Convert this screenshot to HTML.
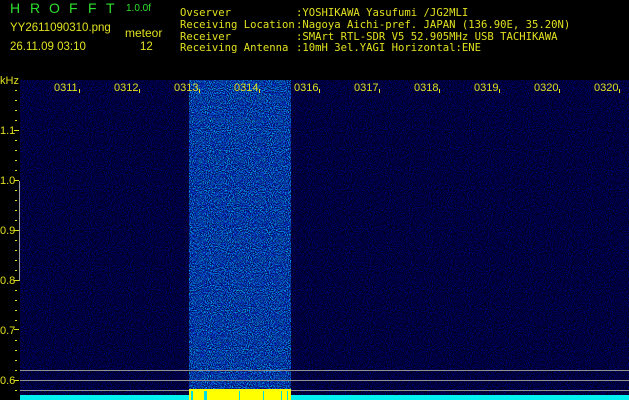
<!DOCTYPE html>
<html><head><style>
html,body{margin:0;padding:0;background:#000;width:629px;height:400px;overflow:hidden}
svg{display:block}
text{font-family:"Liberation Sans",sans-serif}
.m{font-family:"DejaVu Sans Mono","Liberation Mono",monospace}
</style></head><body>
<svg width="629" height="400" xmlns="http://www.w3.org/2000/svg" shape-rendering="crispEdges">
<defs>
<filter id="n1" x="0" y="0" width="100%" height="100%" color-interpolation-filters="sRGB">
<feTurbulence type="fractalNoise" baseFrequency="0.95" numOctaves="2" seed="3"/>
<feColorMatrix values="0 0 0 0 0  0 0 0 0 0  6 0 0 0 -2.75  0 0 0 0 1"/>
</filter>
<filter id="n2" x="0" y="0" width="100%" height="100%" color-interpolation-filters="sRGB">
<feTurbulence type="fractalNoise" baseFrequency="0.95" numOctaves="2" seed="7"/>
<feColorMatrix values="0 0 0 0 0  6 0 0 0 -3.0  5 0 0 0 -1.8  0 0 0 0 1"/>
</filter>
</defs>
<rect x="0" y="0" width="629" height="400" fill="#000"/>
<rect x="20" y="80" width="609" height="316" fill="#000030"/>
<rect x="20" y="80" width="609" height="316" fill="#000" filter="url(#n1)" opacity="0.35"/>
<rect x="189" y="80" width="102" height="312" fill="#0836a4"/>
<rect x="189" y="80" width="102" height="312" fill="#000" filter="url(#n2)" opacity="0.6"/>
<!-- header -->
<g fill="#2ee02e" font-size="14">
<text x="10" y="13">H</text><text x="30" y="13">R</text><text x="49" y="13">O</text><text x="69" y="13">F</text><text x="88" y="13">F</text><text x="106" y="13">T</text>
</g>
<text x="126" y="11" fill="#2ee02e" font-size="10">1.0.0f</text>
<g fill="#e0e020" font-size="11.5">
<text x="10" y="31">YY2611090310.png</text>
<text x="125" y="37" font-size="12">meteor</text>
<text x="10" y="50">26.11.09 03:10</text>
<text x="140" y="50">12</text>
</g>
<g fill="#e0e020" font-size="10.6" class="m">
<text x="180" y="16" class="m">Ovserver</text><text x="296" y="16" class="m">:YOSHIKAWA Yasufumi /JG2MLI</text>
<text x="180" y="28" class="m">Receiving Location</text><text x="296" y="28" class="m">:Nagoya Aichi-pref. JAPAN (136.90E, 35.20N)</text>
<text x="180" y="40" class="m">Receiver</text><text x="296" y="40" class="m">:SMArt RTL-SDR V5 52.905MHz USB TACHIKAWA</text>
<text x="180" y="51" class="m">Receiving Antenna</text><text x="296" y="51" class="m">:10mH 3el.YAGI Horizontal:ENE</text>
</g>
<!-- time labels -->
<g fill="#e0e020" font-size="11">
<text x="0" y="84">kHz</text>
<text x="54" y="91">0311</text><text x="114" y="91">0312</text><text x="174" y="91">0313</text><text x="234" y="91">0314</text><text x="294" y="91">0316</text>
<text x="354" y="91">0317</text><text x="414" y="91">0318</text><text x="474" y="91">0319</text><text x="534" y="91">0320</text><text x="594" y="91">0320</text>
</g>
<g fill="#e0e020">
<rect x="79" y="89" width="1" height="4"/><rect x="139" y="89" width="1" height="4"/><rect x="199" y="89" width="1" height="4"/><rect x="259" y="89" width="1" height="4"/><rect x="319" y="89" width="1" height="4"/><rect x="379" y="89" width="1" height="4"/><rect x="439" y="89" width="1" height="4"/><rect x="499" y="89" width="1" height="4"/><rect x="559" y="89" width="1" height="4"/><rect x="619" y="89" width="1" height="4"/>
</g>
<!-- y axis -->
<g fill="#e0e020" font-size="11">
<text x="0" y="134">1.1</text><text x="0" y="184">1.0</text><text x="0" y="234">0.9</text><text x="0" y="284">0.8</text><text x="0" y="334">0.7</text><text x="0" y="384">0.6</text>
</g>
<g fill="#e0e020">
<rect x="15" y="90" width="2" height="1"/><rect x="15" y="100" width="2" height="1"/><rect x="15" y="110" width="2" height="1"/><rect x="15" y="120" width="2" height="1"/><rect x="14" y="130" width="5" height="1"/>
<rect x="15" y="140" width="2" height="1"/><rect x="15" y="150" width="2" height="1"/><rect x="15" y="160" width="2" height="1"/><rect x="15" y="170" width="2" height="1"/><rect x="14" y="180" width="5" height="1"/>
<rect x="15" y="190" width="2" height="1"/><rect x="15" y="200" width="2" height="1"/><rect x="15" y="210" width="2" height="1"/><rect x="15" y="220" width="2" height="1"/><rect x="14" y="230" width="5" height="1"/>
<rect x="15" y="240" width="2" height="1"/><rect x="15" y="250" width="2" height="1"/><rect x="15" y="260" width="2" height="1"/><rect x="15" y="270" width="2" height="1"/><rect x="14" y="280" width="5" height="1"/>
<rect x="15" y="290" width="2" height="1"/><rect x="15" y="300" width="2" height="1"/><rect x="15" y="310" width="2" height="1"/><rect x="15" y="320" width="2" height="1"/><rect x="14" y="329" width="5" height="1"/>
<rect x="15" y="340" width="2" height="1"/><rect x="15" y="350" width="2" height="1"/><rect x="15" y="360" width="2" height="1"/><rect x="15" y="370" width="2" height="1"/><rect x="14" y="380" width="5" height="1"/><rect x="15" y="390" width="2" height="1"/>
</g>
<rect x="19" y="181" width="1" height="100" fill="#a0a0a0"/>
<!-- horizontal lines -->
<rect x="20" y="370" width="609" height="1" fill="#909090"/>
<rect x="20" y="380" width="609" height="1" fill="#909090"/>
<rect x="20" y="390" width="609" height="1" fill="#909090"/>
<!-- bottom bars -->
<rect x="20" y="395" width="609" height="5" fill="#00f0f0"/>
<rect x="189" y="389" width="102" height="11" fill="#ffff00"/>
<g fill="#00e0e0"><rect x="191" y="391" width="2" height="9"/><rect x="204" y="391" width="3" height="9"/><rect x="239" y="391" width="1" height="9"/><rect x="263" y="391" width="1" height="9"/><rect x="281" y="391" width="1" height="9"/><rect x="287" y="391" width="1" height="9"/></g>
</svg>
</body></html>
